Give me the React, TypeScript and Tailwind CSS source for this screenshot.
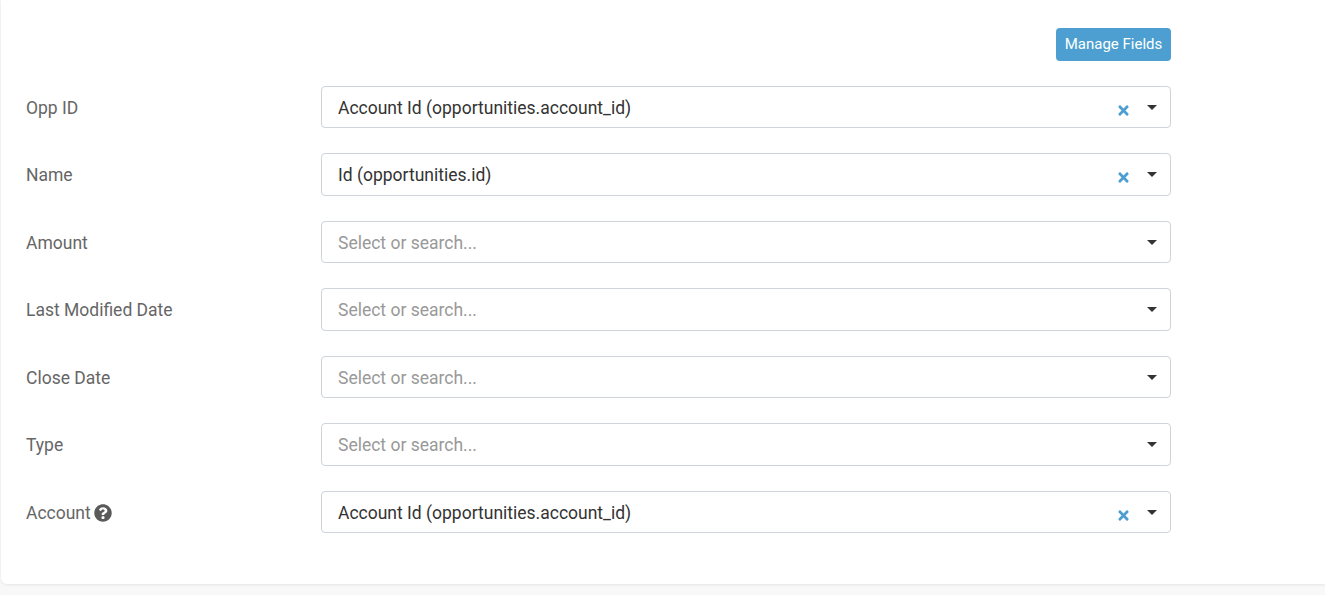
import { FaQuestionCircle, FaTimes } from 'react-icons/fa'

const fields = [
  { label: 'Opp ID', value: 'Account Id (opportunities.account_id)' },
  { label: 'Name', value: 'Id (opportunities.id)' },
  { label: 'Amount', value: '' },
  { label: 'Last Modified Date', value: '' },
  { label: 'Close Date', value: '' },
  { label: 'Type', value: '' },
  { label: 'Account', value: 'Account Id (opportunities.account_id)', help: true },
]

export default function App() {
  return (
    <div className="h-[595px] overflow-hidden bg-[#f8f8f8] font-['Roboto',sans-serif]">
      <div className="ml-px h-[584px] rounded-bl-md bg-white pl-[25px] pt-7 pr-[154px] shadow-[0_1px_3px_rgba(0,0,0,0.08)]">
        <div className="flex justify-end">
          <button className="flex h-[33px] w-[115px] items-center justify-center rounded bg-[#4c9fd0] text-[15px] text-white">
            Manage Fields
          </button>
        </div>

        <div className="mt-[24.5px] flex flex-col gap-[25px]">
          {fields.map((field) => (
            <div key={field.label} className="flex h-[42.5px] items-center">
              <div className="flex w-[295px] items-center gap-[3.5px] pt-0.5 text-[17.5px] text-[#666666]">
                {field.label}
                {field.help && <FaQuestionCircle className="text-[18px] text-[#5a5a5a]" />}
              </div>
              <div className="relative flex h-full flex-1 items-center rounded border border-[#ced4da] pl-4 pt-0.5 text-[17.5px]">
                {field.value ? (
                  <span className="text-[#333333]">{field.value}</span>
                ) : (
                  <span className="text-[#999999]">Select or search...</span>
                )}
                {field.value && (
                  <FaTimes className="absolute left-[794px] top-[16px] text-[15px] text-[#4c9fd0]" />
                )}
                <span className="absolute right-[13px] top-[18px] h-0 w-0 border-x-[5px] border-t-[5px] border-x-transparent border-t-[#333333]" />
              </div>
            </div>
          ))}
        </div>
      </div>
    </div>
  )
}
